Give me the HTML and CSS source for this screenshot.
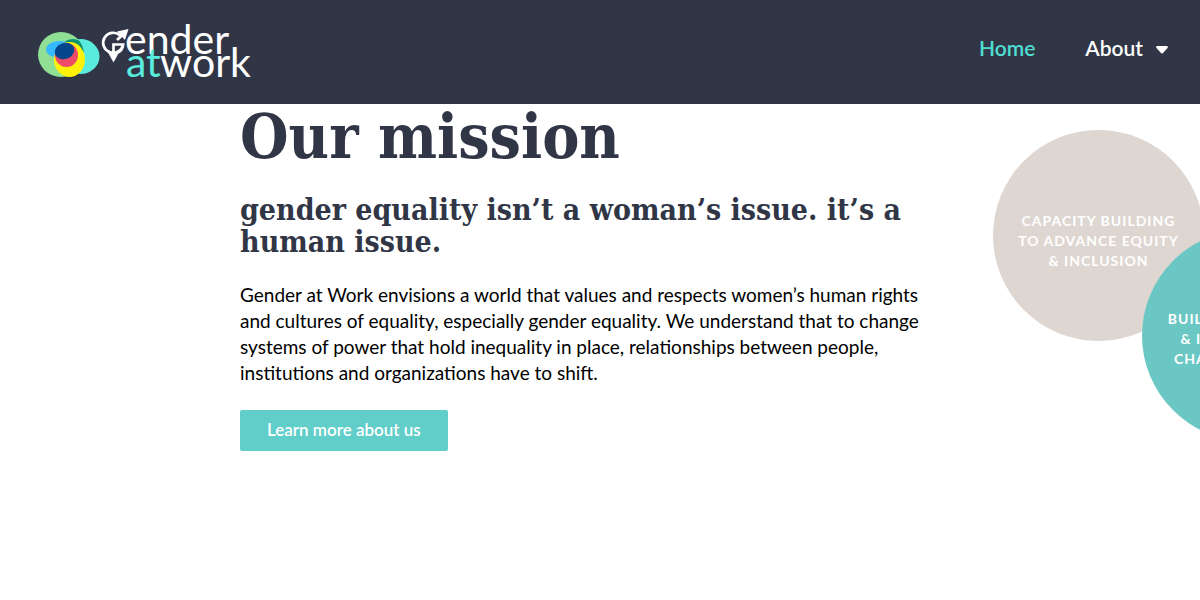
FILE: index.html
```html
<!DOCTYPE html>
<html lang="en">
<head>
  <meta charset="UTF-8">
  <meta name="viewport" content="width=device-width, initial-scale=1.0">
  <title>Gender at Work</title>
  <link rel="stylesheet" href="styles.css">
</head>
<body>
  <header class="site-header">
    <a class="logo" href="#" aria-label="Gender at Work">
      <svg width="216" height="64" viewBox="0 0 216 64">
        <defs>
          <clipPath id="clip-green"><ellipse cx="24" cy="34.500" rx="23" ry="22.500"/></clipPath>
          <clipPath id="clip-aqua"><ellipse cx="43.500" cy="36.500" rx="19" ry="17.500"/></clipPath>
        </defs>
        <ellipse cx="43.500" cy="36.500" rx="19" ry="17.500" fill="#59ebdd"/>
        <ellipse cx="24" cy="34.500" rx="23" ry="22.500" fill="#8fe094"/>
        <ellipse cx="36" cy="28" rx="12" ry="9" fill="#0b9471" clip-path="url(#clip-green)"/>
        <ellipse cx="22.500" cy="29.500" rx="13.500" ry="8.500" fill="#36baff"/>
        <ellipse cx="32.500" cy="39.500" rx="15.500" ry="17.500" fill="#fff20a"/>
        <ellipse cx="29.500" cy="35" rx="11.500" ry="12" fill="#ee4b68"/>
        <ellipse cx="27.500" cy="31" rx="10" ry="8" fill="#03468a" transform="rotate(-20 27.500 31)"/>

        <!-- G symbol: ring with two arrows -->
        <g fill="none" stroke="#fff" stroke-width="2.700">
          <path d="M83 15.500 A10 10 0 1 0 86 24.500 H76.500 V34"/>
          <path d="M86 24 Q86 30 81 32.500"/>
          <path d="M80 20 L87 13.500"/>
        </g>
        <g fill="#fff">
          <path d="M80 11.500 L91.500 9 L88 20 Z"/>
          <path d="M71 32.500 H82 L76.500 42.500 Z"/>
        </g>
        <g class="logo-text">
          <text x="88" y="34">ender</text>
          <text x="89" y="57" class="logo-at">at</text>
          <text x="123" y="57">work</text>
        </g>
      </svg>
    </a>
    <nav class="main-nav">
      <a href="#" class="active">Home</a>
      <a href="#">About
        <svg class="caret" width="12" height="8" viewBox="0 0 12 8"><path d="M1 0 H11 Q12.500 0.500 11.500 2 L7 7 Q6 8 5 7 L0.500 2 Q-0.500 0.500 1 0 Z" fill="currentColor"/></svg>
      </a>
    </nav>
  </header>

  <main class="mission">
    <div class="mission-text">
      <h1>Our mission</h1>
      <h2>gender equality isn’t a woman’s issue. it’s a human issue.</h2>
      <p>Gender at Work envisions a world that values and respects women’s human rights and cultures of equality, especially gender equality. We understand that to change systems of power that hold inequality in place, relationships between people, institutions and organizations have to shift.</p>
      <a class="btn" href="#">Learn more about us</a>
    </div>
    <div class="diagram">
      <div class="circle circle-capacity">CAPACITY BUILDING<br>TO ADVANCE EQUITY<br>&amp; INCLUSION</div>
      <div class="circle circle-change">BUILDING INCLUSIVE<br>&amp; INSTITUTIONAL<br>CHANGE PROGRAM</div>
    </div>
  </main>
</body>
</html>
```
FILE: styles.css
```css
:root {
  --navy: #313647;
  --teal: #61cec9;
  --aqua: #4fdfd2;
  --sand: #ded6d1;
}

* {
  box-sizing: border-box;
}

body {
  margin: 0;
  font-family: Lato, "Open Sans", sans-serif;
  color: #000;
  background: #fff;
}

.site-header {
  display: flex;
  justify-content: space-between;
  align-items: flex-start;
  min-height: 104px;
  padding: 20px 32px 20px 37px;
  background: var(--navy);
}

.logo svg {
  display: block;
  overflow: visible;
}

.logo-text {
  font-family: Lato, sans-serif;
  font-size: 41px;
  fill: #fff;
}

.logo-at {
  fill: #59ebdd;
}

.main-nav {
  display: flex;
  gap: 50px;
  padding-top: 16px;
}

.main-nav a {
  display: flex;
  align-items: center;
  gap: 13px;
  font-size: 21px;
  font-weight: 600;
  line-height: 24px;
  color: #fff;
  text-decoration: none;
}

.main-nav .active {
  color: var(--aqua);
}

.caret {
  margin-top: 3px;
}

.mission {
  display: flex;
  gap: 65px;
  padding-left: 20%;
  overflow: hidden;
}

.mission-text {
  flex: 0 1 688px;
  padding-bottom: 40px;
}

h1,
h2 {
  margin: 0;
  font-family: "DejaVu Serif Condensed", "DejaVu Serif", serif;
  font-weight: 700;
  color: var(--navy);
}

h1 {
  font-size: 62px;
  line-height: 66px;
}

h2 {
  margin-top: 24px;
  font-size: 30px;
  line-height: 32px;
}

p {
  margin: 24px 0;
  font-size: 19px;
  line-height: 26px;
}

.btn {
  display: inline-block;
  padding: 8px 27px 9px;
  border-radius: 2px;
  font-size: 17px;
  font-weight: 600;
  line-height: 24px;
  color: #fff;
  background: var(--teal);
  text-decoration: none;
}

.diagram {
  position: relative;
  flex: 1 0 200px;
  min-height: 340px;
}

/* the circles overlap, so they are placed freely */
.circle {
  position: absolute;
  display: flex;
  align-items: center;
  justify-content: center;
  width: 211px;
  height: 211px;
  border-radius: 50%;
  padding-top: 10px;
  font-size: 14px;
  font-weight: 700;
  line-height: 20px;
  letter-spacing: 1px;
  text-align: center;
  white-space: nowrap;
  color: #fff;
}

.circle-capacity {
  left: 0;
  top: 26px;
  background: var(--sand);
}

.circle-change {
  left: 149px;
  top: 126px;
  padding-top: 6px;
  background: #6bc7c4;
}
```
